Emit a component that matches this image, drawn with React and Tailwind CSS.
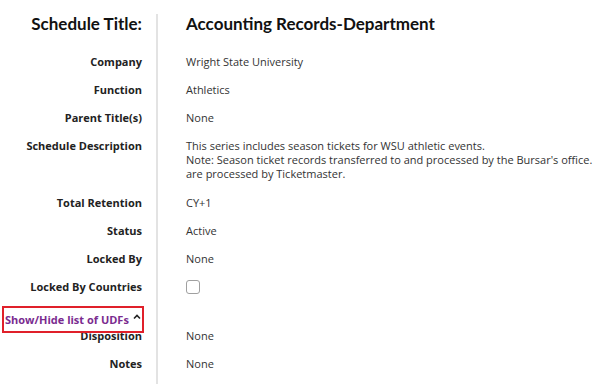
import React from "react";

const Row = ({ label, children, className = "" }) => (
  <div className="flex">
    <div className={`w-[156px] shrink-0 pr-[14px] text-right font-bold text-[#222] ${className}`}>{label}</div>
    <div className={`flex-1 border-l-2 border-[#e3e3e3] pl-[28px] text-[#333] ${className}`}>{children}</div>
  </div>
);

export default function App() {
  return (
    <div className="w-[600px] h-[384px] overflow-hidden bg-white text-[11px] leading-[14px]" style={{ fontFamily: "'Open Sans', Lato, sans-serif" }}>
      <div className="pt-[14px]">
        <div className="flex" style={{ fontFamily: "Lato, sans-serif" }}>
          <div className="w-[156px] shrink-0 pr-[14px] text-right text-[17px] leading-[20px] font-bold text-[#111] pb-[14px]">Schedule Title:</div>
          <div className="flex-1 border-l-2 border-[#e3e3e3] pl-[28px] text-[17px] leading-[20px] font-bold text-[#111] pb-[14px]">Accounting Records-Department</div>
        </div>
        <Row label="Company" className="py-[7px]">Wright State University</Row>
        <Row label="Function" className="py-[7px]">Athletics</Row>
        <Row label="Parent Title(s)" className="py-[7px]">None</Row>
        <Row label="Schedule Description" className="pt-[7px] pb-[8px]">
          <div>This series includes season tickets for WSU athletic events.</div>
          <div>Note: Season ticket records transferred to and processed by the Bursar's office.</div>
          <div>are processed by Ticketmaster.</div>
        </Row>
        <Row label="Total Retention" className="py-[7px]">CY+1</Row>
        <Row label="Status" className="py-[7px]">Active</Row>
        <Row label="Locked By" className="py-[7px]">None</Row>
        <Row label="Locked By Countries" className="py-[7px]">
          <div className="w-[14px] h-[14px] rounded-[3px] border-[1.5px] border-[#a0a0a0] bg-white" />
        </Row>
        <div className="relative">
          <Row label="" className="h-[21px]"></Row>
          <div className="absolute left-[2px] top-[5px] w-[142px] h-[27px] border-2 border-[#e0202a] z-10 flex items-center pl-[1px]">
            <span className="font-bold text-[11px] text-[#7a2b8f]">Show/Hide list of UDFs</span>
            <svg className="ml-[4px] mb-[5px]" width="8" height="6" viewBox="0 0 8 6" fill="none">
              <path d="M1 4.5 L4 1.5 L7 4.5" stroke="#222" strokeWidth="1.6" />
            </svg>
          </div>
        </div>
        <Row label="Disposition" className="py-[7px]">None</Row>
        <Row label="Notes" className="py-[7px]">None</Row>
        <Row label="" className="h-[20px]"></Row>
      </div>
    </div>
  );
}
